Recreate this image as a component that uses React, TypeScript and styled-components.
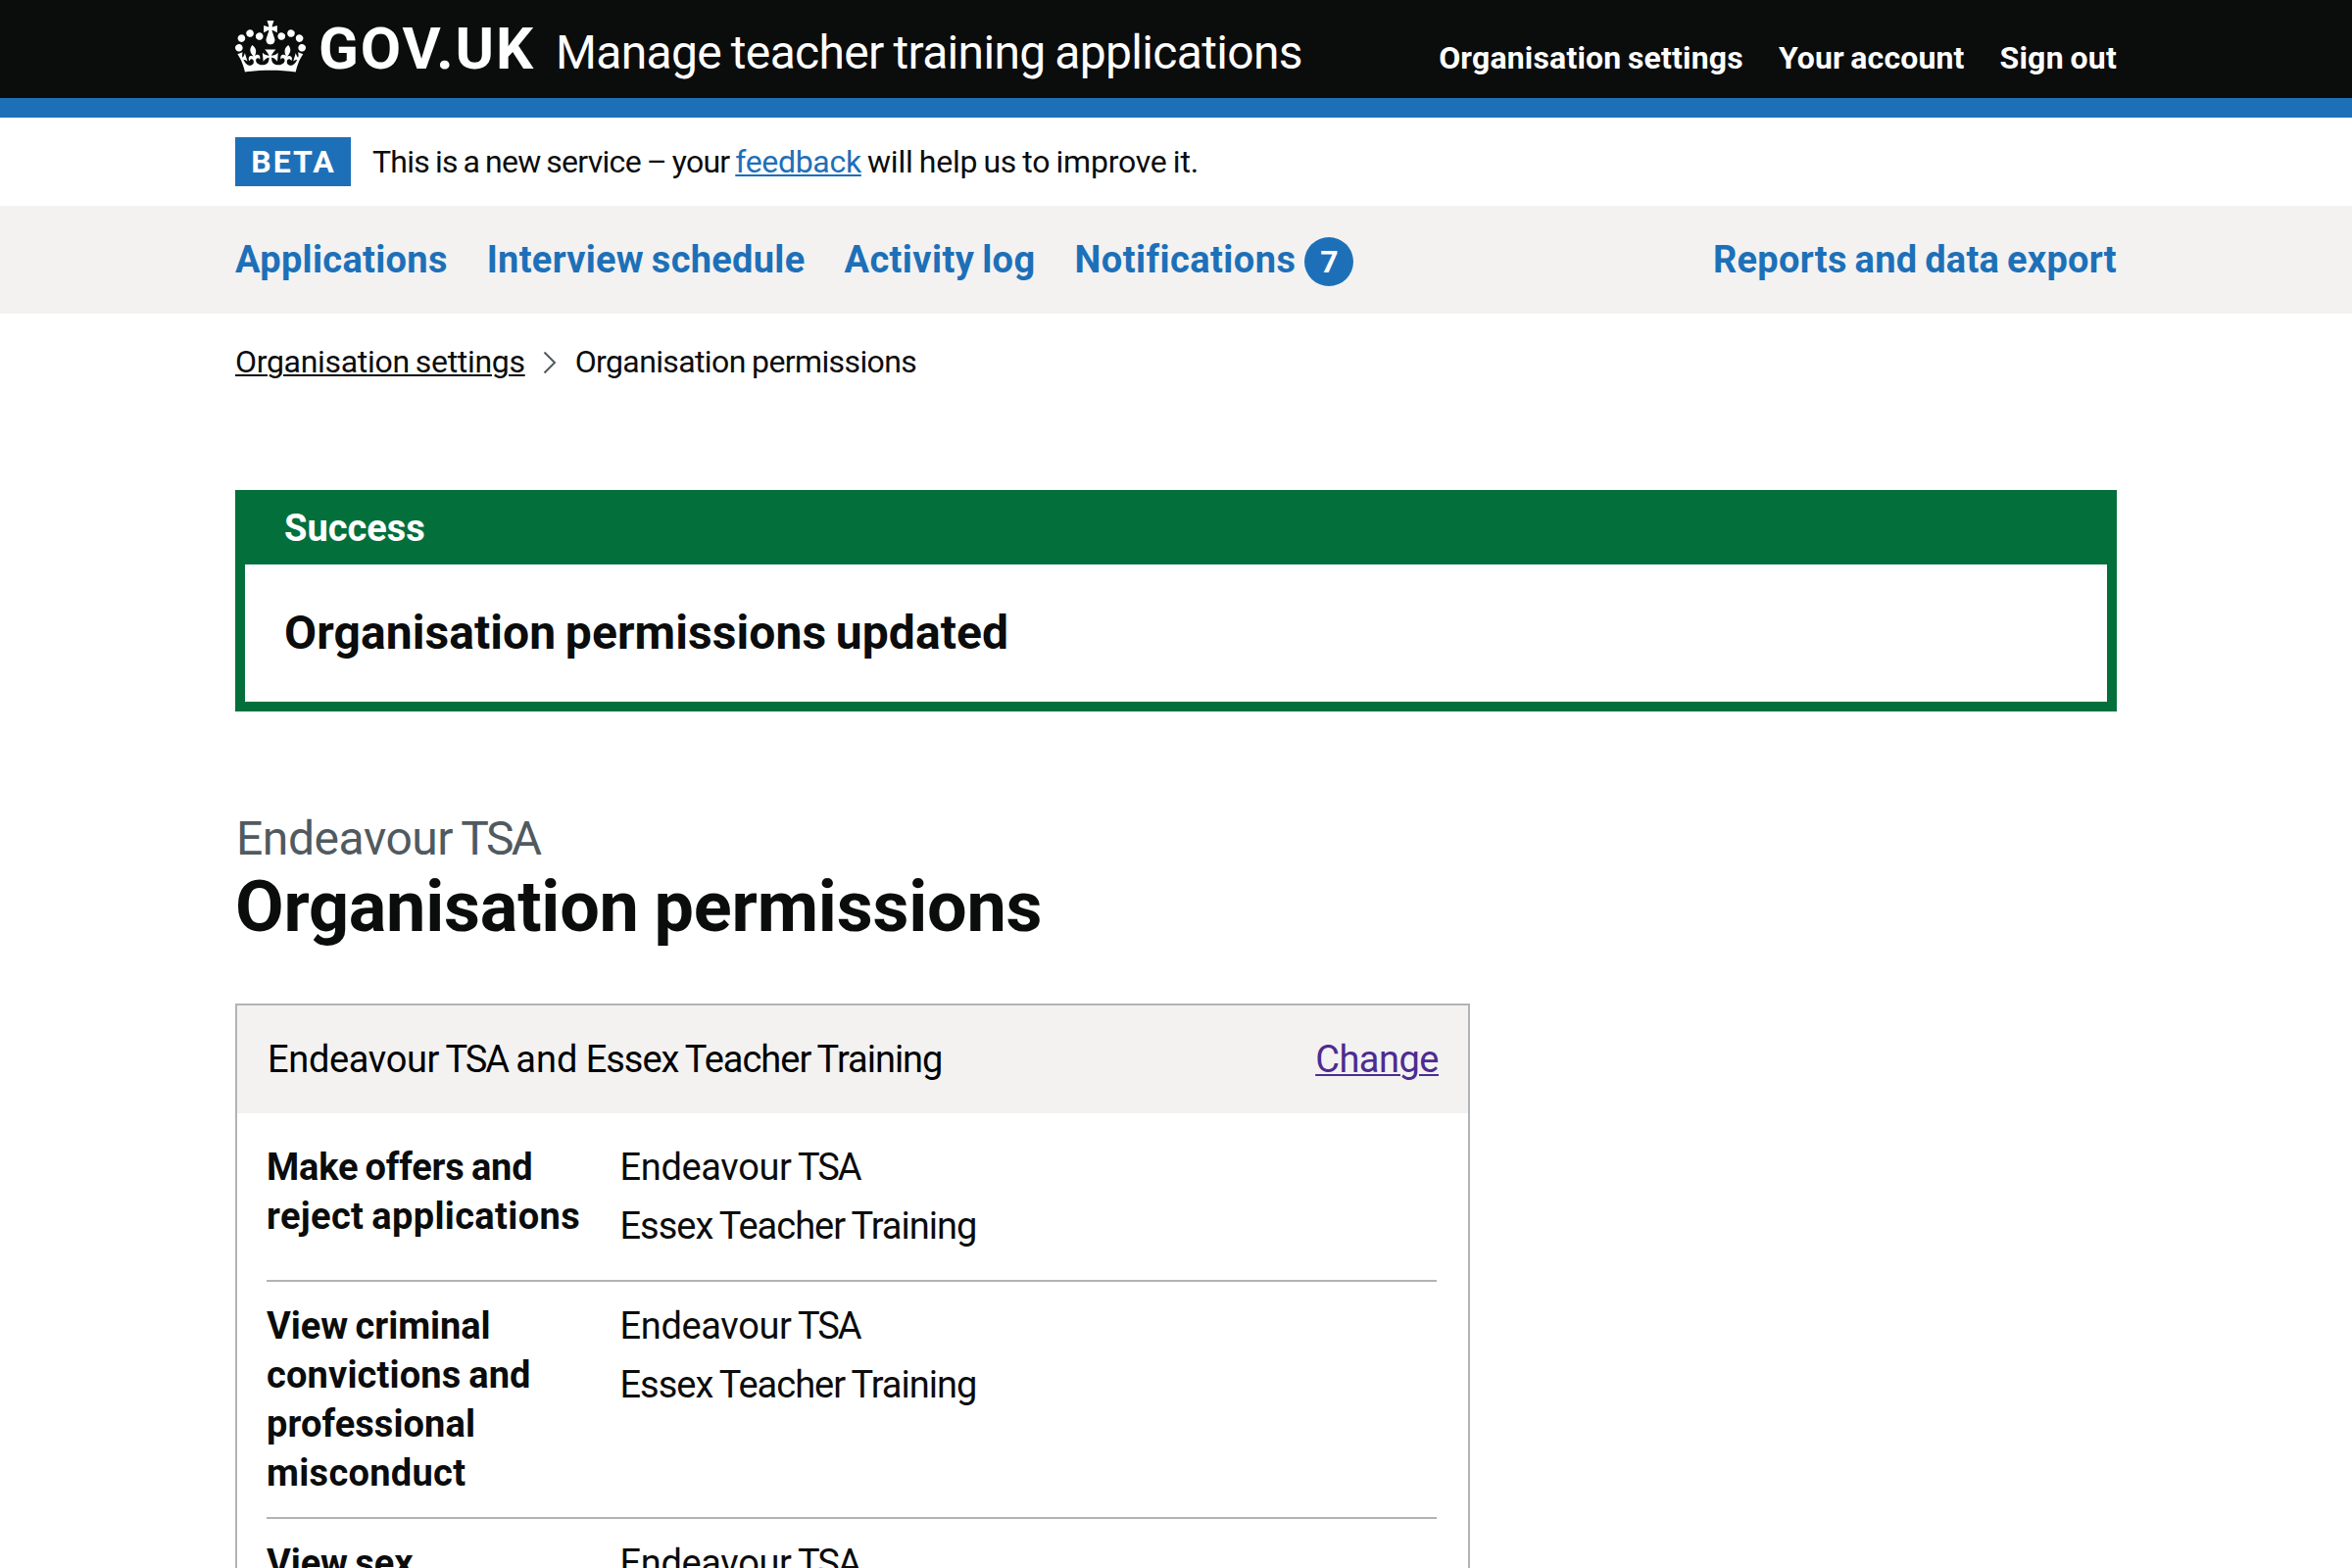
import React from "react";
import styled, { createGlobalStyle, css } from "styled-components";

const color = {
  black: "#0b0c0c",
  blue: "#1d70b8",
  green: "#03703c",
  grey: "#f3f2f1",
  border: "#b1b4b6",
  secondary: "#505a5f",
  visited: "#4c2c92",
};

const GlobalStyle = createGlobalStyle`
  *, *::before, *::after { box-sizing: border-box; }
  html, body { margin: 0; height: 1600px; overflow: hidden; background: #fff; }
  body { font-family: Roboto, "Liberation Sans", Arial, sans-serif; color: ${color.black}; }
  h1, h2, p, dl, dt, dd, ul, ol { margin: 0; padding: 0; }
  ul, ol { list-style: none; }
`;

type Spacing = { $track?: number; $words?: number };

const spacing = css<Spacing>`
  letter-spacing: ${(p) => p.$track ?? 0}px;
  word-spacing: ${(p) => p.$words ?? -0.05}em;
`;

const Container = styled.div`
  width: 1920px;
  margin: 0 auto;
`;

const Header = styled.header`
  height: 120px;
  background: ${color.black};
  border-bottom: 20px solid ${color.blue};
`;

const HeaderRow = styled(Container)`
  display: flex;
  align-items: flex-start;
  white-space: nowrap;
`;

const Crown = styled.svg`
  display: block;
  width: 72px;
  height: 53px;
  margin-top: 21px;
  fill: #fff;
`;

const Logotype = styled.span`
  width: 242px;
  margin: 20px 0 0 13px;
  color: #fff;
  font-size: 60px;
  font-weight: 700;
  line-height: 60px;
  letter-spacing: 1.9px;
`;

const ServiceName = styled.span<Spacing>`
  margin-top: 24px;
  color: #fff;
  font-size: 48px;
  line-height: 60px;
  ${spacing}
`;

const HeaderNav = styled.nav`
  display: flex;
  gap: 36px;
  margin: 39px 0 0 auto;
`;

const HeaderLink = styled.a<Spacing>`
  color: #fff;
  font-size: 32px;
  font-weight: 700;
  line-height: 40px;
  ${spacing}
`;

const PhaseBanner = styled(Container)`
  display: flex;
  height: 90px;
  padding-top: 20px;
  font-size: 32px;
  line-height: 50px;
  white-space: nowrap;
`;

const PhaseTag = styled.strong`
  width: 118px;
  height: 50px;
  margin-right: 22px;
  padding-left: 1px;
  background: ${color.blue};
  color: #fff;
  text-align: center;
  letter-spacing: 2px;
`;

const Text = styled.span<Spacing>`
  white-space: pre;
  ${spacing}
`;

const Link = styled.a<Spacing & { $tone: string }>`
  color: ${(p) => p.$tone};
  text-decoration: underline;
  text-decoration-thickness: 2px;
  text-underline-offset: 2px;
  ${spacing}
`;

const NavBar = styled.nav`
  height: 110px;
  padding-top: 30px;
  background: ${color.grey};
`;

const NavList = styled(Container)`
  display: flex;
  gap: 40px;
  white-space: nowrap;
`;

const NavItem = styled.a<Spacing & { $end?: boolean }>`
  display: flex;
  margin-left: ${(p) => (p.$end ? "auto" : "0")};
  color: ${color.blue};
  font-size: 38px;
  font-weight: 700;
  line-height: 50px;
  ${spacing}
`;

const Badge = styled.span`
  width: 50px;
  height: 50px;
  margin: 2px 0 0 9px;
  border-radius: 50%;
  background: ${color.blue};
  color: #fff;
  font-size: 32px;
  letter-spacing: 0;
  text-align: center;
`;

const Breadcrumbs = styled.ol`
  display: flex;
  width: 1920px;
  height: 180px;
  margin: 0 auto;
  padding-top: 30px;
`;

const Crumb = styled.li<Spacing>`
  font-size: 32px;
  line-height: 38px;
  ${spacing}
`;

const Chevron = styled.svg`
  display: block;
  width: 14px;
  height: 24px;
  margin: 8px 19px 0 18px;
  fill: none;
  stroke: ${color.secondary};
  stroke-width: 2;
`;

const Banner = styled.section`
  margin-bottom: 100px;
  border: 10px solid ${color.green};
  border-top: 0;
`;

const BannerHeader = styled.div`
  height: 76px;
  padding: 14px 40px 0;
  background: ${color.green};
`;

const BannerTitle = styled.h2`
  color: #fff;
  font-size: 38px;
  line-height: 50px;
`;

const BannerContent = styled.p<Spacing>`
  padding: 40px;
  font-size: 48px;
  font-weight: 700;
  line-height: 60px;
  ${spacing}
`;

const Caption = styled.p`
  padding-left: 1px;
  color: ${color.secondary};
  font-size: 48px;
  line-height: 60px;
`;

const PageTitle = styled.h1<Spacing>`
  margin-bottom: 58px;
  font-size: 72px;
  line-height: 80px;
  ${spacing}
`;

const Organisation = styled.span<{ $tracking: number; $gap: number }>`
  letter-spacing: ${(p) => p.$tracking}em;
  word-spacing: ${(p) => p.$gap}em;
`;

const Acronym = styled.span`
  letter-spacing: -0.055em;
`;

const Card = styled.section`
  width: 1260px;
  border: 2px solid ${color.border};
  font-size: 38px;
  line-height: 50px;
`;

const CardHeader = styled.header`
  display: flex;
  justify-content: space-between;
  padding: 30px 30px 30px 31px;
  background: ${color.grey};
  color: #000;
`;

const SummaryList = styled.dl`
  padding: 10px 32px 0 30px;
`;

const SummaryRow = styled.div`
  display: grid;
  grid-template-columns: 360.5px 1fr;
  padding: 20px 0;
  border-bottom: 2px solid ${color.border};
`;

const SummaryKey = styled.dt`
  font-weight: 700;
  white-space: nowrap;
`;

const KeyLine = styled.span<Spacing>`
  display: block;
  ${spacing}
`;

const ValueItem = styled.li`
  margin-bottom: 10px;
`;

const Endeavour = () => (
  <Organisation $tracking={-0.009} $gap={-0.07}>
    Endeavour <Acronym>TSA</Acronym>
  </Organisation>
);

const Essex = () => (
  <Organisation $tracking={-0.0265} $gap={-0.035}>
    Essex Teacher Training
  </Organisation>
);

type Line = { text: string; track: number };

const rows: Line[][] = [
  [
    { text: "Make offers and", track: -0.2 },
    { text: "reject applications", track: 0.36 },
  ],
  [
    { text: "View criminal", track: -0.06 },
    { text: "convictions and", track: 0.15 },
    { text: "professional", track: 0.08 },
    { text: "misconduct", track: 0.3 },
  ],
  [{ text: "View sex", track: -0.1 }],
];

export default function App() {
  return (
    <>
      <GlobalStyle />
      <Header>
        <HeaderRow>
          <Crown viewBox="0 0 132 97" preserveAspectRatio="none" aria-hidden="true">
            <path d="M25 30.2c3.5 1.5 7.7-.2 9.1-3.7 1.5-3.6-.2-7.8-3.9-9.2-3.6-1.4-7.6.3-9.1 3.9-1.4 3.5.3 7.5 3.9 9zM9 39.5c3.6 1.5 7.8-.2 9.2-3.7 1.5-3.6-.2-7.8-3.9-9.1-3.6-1.5-7.6.2-9.1 3.8-1.4 3.5.3 7.5 3.8 9zM4.4 57.2c3.5 1.5 7.7-.2 9.1-3.8 1.5-3.6-.2-7.7-3.9-9.1-3.5-1.5-7.6.3-9.1 3.8-1.4 3.5.3 7.6 3.9 9.1zm38.3-21.4c3.5 1.5 7.7-.2 9.1-3.8 1.5-3.6-.2-7.7-3.9-9.1-3.6-1.5-7.6.3-9.1 3.8-1.3 3.6.4 7.7 3.9 9.1zm64.4-5.6c-3.6 1.5-7.8-.2-9.1-3.7-1.5-3.6.2-7.8 3.8-9.2 3.6-1.4 7.7.3 9.2 3.9 1.3 3.5-.4 7.5-3.9 9zm15.9 9.3c-3.6 1.5-7.7-.2-9.1-3.7-1.5-3.6.2-7.8 3.7-9.1 3.6-1.5 7.7.2 9.2 3.8 1.5 3.5-.3 7.5-3.8 9zm4.7 17.7c-3.6 1.5-7.8-.2-9.2-3.8-1.5-3.6.2-7.7 3.9-9.1 3.6-1.5 7.7.3 9.2 3.8 1.3 3.5-.4 7.6-3.9 9.1zM89.3 35.8c-3.6 1.5-7.8-.2-9.2-3.8-1.4-3.6.2-7.7 3.9-9.1 3.6-1.5 7.7.3 9.2 3.8 1.4 3.6-.3 7.7-3.9 9.1zM69.7 17.7l8.9 4.7V9.3l-8.9 2.8c-.2-.3-.5-.6-.9-.9L72.4 0H59.6l3.5 11.2c-.3.3-.6.5-.9.9l-8.8-2.8v13.1l8.8-4.7c.3.3.6.7.9.9l-5 15.4v.1c-.2.8-.4 1.6-.4 2.4 0 4.1 3.1 7.5 7 8.1h.2c.3 0 .7.1 1 .1.4 0 .7 0 1-.1h.2c4-.6 7.1-4.1 7.1-8.1 0-.8-.1-1.7-.4-2.4V34l-5.1-15.4c.4-.2.7-.6 1-.9zM66 92.8c16.9 0 32.8 1.1 47.1 3.2 4-16.9 8.9-26.7 14-33.5l-9.6-3.4c1 4.9 1.1 7.2 0 10.2-1.5-1.4-3-4.3-4.2-8.7L108.6 76c2.8-2 5-3.2 7.5-3.3-4.4 9.4-10 11.9-13.6 11.2-4.3-.8-6.3-4.6-5.6-7.9 1-4.7 5.7-5.9 8-.5 4.3-8.7-3-11.4-7.6-8.8 7.1-7.2 7.9-13.5 2.1-21.1-8 6.1-8.1 12.3-4.5 20.8-4.7-5.4-12.1-2.5-9.5 6.2 3.4-5.2 7.9-2 7.2 3.1-.6 4.3-6.4 7.8-13.5 7.2-10.3-.9-10.9-8-11.2-13.8 2.5-.5 7.1 1.8 11 7.3L80.2 60c-4.1 4.4-8 5.3-12.3 5.4 1.4-4.4 8-11.6 8-11.6H55.5s6.4 7.2 7.9 11.6c-4.2-.1-8-1-12.3-5.4l1.4 16.4c3.9-5.5 8.5-7.7 10.9-7.3-.3 5.8-.9 12.8-11.1 13.8-7.2.6-12.9-2.9-13.5-7.2-.7-5 3.8-8.3 7.1-3.1 2.7-8.7-4.6-11.6-9.4-6.2 3.7-8.5 3.6-14.7-4.6-20.8-5.8 7.6-5 13.9 2.2 21.1-4.7-2.6-11.9.1-7.7 8.8 2.3-5.5 7.1-4.2 8.1.5.7 3.3-1.3 7.1-5.7 7.9-3.5.7-9-1.8-13.5-11.2 2.5.1 4.7 1.3 7.5 3.3l-4.7-15.4c-1.2 4.4-2.7 7.2-4.3 8.7-1.1-3-.9-5.3 0-10.2l-9.5 3.4c5 6.9 9.9 16.7 14 33.5 14.8-2.1 30.8-3.2 47.7-3.2z" />
          </Crown>
          <Logotype>GOV.UK</Logotype>
          <ServiceName $track={-0.67} $words={-0.03}>Manage teacher training applications</ServiceName>
          <HeaderNav>
            <HeaderLink $track={0.18}>Organisation settings</HeaderLink>
            <HeaderLink $track={0.12}>Your account</HeaderLink>
            <HeaderLink $track={0.25}>Sign out</HeaderLink>
          </HeaderNav>
        </HeaderRow>
      </Header>

      <PhaseBanner>
        <PhaseTag>BETA</PhaseTag>
        <Text $track={-0.72} $words={-0.045}>{"This is a new service – your "}</Text>
        <Link $tone={color.blue} $track={-0.32}>feedback</Link>
        <Text $track={-0.22} $words={-0.047}>{" will help us to improve it."}</Text>
      </PhaseBanner>

      <NavBar>
        <NavList>
          <NavItem $track={0.3}>Applications</NavItem>
          <NavItem $track={0.28}>Interview schedule</NavItem>
          <NavItem $track={0.4}>Activity log</NavItem>
          <NavItem $track={0.44}>
            Notifications<Badge>7</Badge>
          </NavItem>
          <NavItem $end $track={0.27}>Reports and data export</NavItem>
        </NavList>
      </NavBar>

      <Breadcrumbs>
        <Crumb>
          <Link $tone={color.black} $track={-0.31}>Organisation settings</Link>
        </Crumb>
        <li aria-hidden="true">
          <Chevron viewBox="0 0 14 24">
            <path d="M1.5 1.5 12 12 1.5 22.5" />
          </Chevron>
        </li>
        <Crumb $track={-0.62} $words={-0.03}>Organisation permissions</Crumb>
      </Breadcrumbs>

      <Container as="main">
        <Banner>
          <BannerHeader>
            <BannerTitle>Success</BannerTitle>
          </BannerHeader>
          <BannerContent $track={0.08}>Organisation permissions updated</BannerContent>
        </Banner>

        <Caption>
          <Endeavour />
        </Caption>
        <PageTitle $track={-0.22} $words={-0.025}>Organisation permissions</PageTitle>

        <Card>
          <CardHeader>
            <Text $words={-0.03}>
              <Endeavour /> and <Essex />
            </Text>
            <Link $tone={color.visited} $track={-0.5}>Change</Link>
          </CardHeader>
          <SummaryList>
            {rows.map((lines) => (
              <SummaryRow key={lines[0].text}>
                <SummaryKey>
                  {lines.map((line) => (
                    <KeyLine key={line.text} $track={line.track}>{line.text}</KeyLine>
                  ))}
                </SummaryKey>
                <dd>
                  <ul>
                    <ValueItem>
                      <Endeavour />
                    </ValueItem>
                    <ValueItem>
                      <Essex />
                    </ValueItem>
                  </ul>
                </dd>
              </SummaryRow>
            ))}
          </SummaryList>
        </Card>
      </Container>
    </>
  );
}
